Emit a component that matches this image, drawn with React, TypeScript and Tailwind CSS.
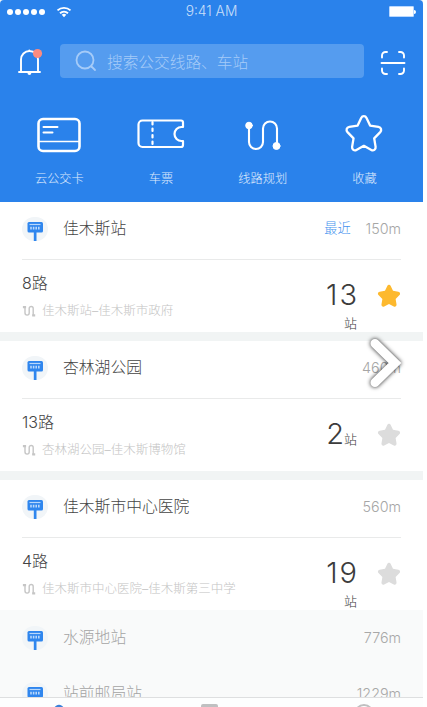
import type { ReactNode } from "react";

type Stop = {
  name: string;
  distance: string;
  nearest?: boolean;
  line: string;
  route: string;
  left: string;
  starred?: boolean;
  wrapped?: boolean;
};

const STOPS: Stop[] = [
  { name: "佳木斯站", distance: "150m", nearest: true, line: "8路", route: "佳木斯站–佳木斯市政府", left: "13", starred: true, wrapped: true },
  { name: "杏林湖公园", distance: "460m", line: "13路", route: "杏林湖公园–佳木斯博物馆", left: "2" },
  { name: "佳木斯市中心医院", distance: "560m", line: "4路", route: "佳木斯市中心医院–佳木斯第三中学", left: "19", wrapped: true },
];

const STAR = "M12 2.2c.7 0 1.2.4 1.5 1l2 4.3 4.7.7c1.500.2 2 1.900 1 3l-3.400 3.500.8 4.800c.2 1.400-1.200 2.400-2.400 1.700L12 18.900l-4.200 2.300c-1.200.7-2.600-.3-2.400-1.700l.8-4.800-3.400-3.500c-1-1.100-.5-2.800 1-3l4.700-.7 2-4.300c.3-.6.8-1 1.500-1Z";

function StopSign() {
  return (
    <span className="flex h-6 w-[26px] shrink-0 items-center justify-center rounded-full bg-[#f1f5f8]">
      <svg viewBox="0 0 26 24" className="h-6 w-[26px]" aria-hidden>
        <rect x="5.500" y="5" width="15.500" height="10.500" rx="1.500" fill="#2f86ee" />
        <path d="M11.800 14h2.700v10h-2.700z" fill="#2f86ee" />
        <path d="M7.500 7.500h11" stroke="#b9d8fb" strokeWidth="1.200" />
        <path d="M8.200 11.200h9.500" stroke="#b9d8fb" strokeWidth="2.800" strokeDasharray="1.600 1" />
      </svg>
    </span>
  );
}

function RouteIcon() {
  return (
    <svg viewBox="0 0 14 12" className="h-3 w-3.5 shrink-0" fill="none" stroke="#c6c6c6" aria-hidden>
      <path d="M3 2v6a2.100 2.100 0 0 0 4.200 0V3.500a2 2 0 0 1 4 0V11" strokeWidth="1.400" />
      <path d="M.9 2.200h3.200M10.200 10.300h3" strokeWidth="2.200" />
    </svg>
  );
}

function Shortcut({ label, children }: { label: string; children: ReactNode }) {
  return (
    <div className="flex w-[101.700px] flex-col items-center">
      <svg viewBox="0 0 50 42" className="h-[42px] w-[50px]" fill="none" stroke="white" strokeLinecap="round" strokeLinejoin="round" aria-hidden>
        {children}
      </svg>
      <span className="mt-[15px] text-[12.200px] leading-[18px] text-white/85">{label}</span>
    </div>
  );
}

function StopCard({ stop }: { stop: Stop }) {
  return (
    <section className="mb-[9px] h-[130px] shrink-0 bg-white px-[22px] last:mb-0">
      <div className="flex h-[58px] items-center border-b border-[#e9eaea] pb-[3px]">
        <StopSign />
        <h2 className="ml-[15px] flex-1 text-[15.800px] text-[#444]">{stop.name}</h2>
        {stop.nearest && <span className="mr-[15px] text-[13.200px] text-[#4593ee]">最近</span>}
        <span className="text-[14.300px] text-[#a6a6a6]">{stop.distance}</span>
      </div>
      <div className="flex h-[72px]">
        <div className="flex-1 pt-[11px]">
          <p className="text-[16px] leading-[24px] text-[#444]">{stop.line}</p>
          <p className="mt-[7px] flex items-center gap-[6px] text-[12.500px] leading-[18px] text-[#c4c4c4]">
            <RouteIcon />
            {stop.route}
          </p>
        </div>
        {stop.wrapped ? (
          <div className="flex flex-col items-end pt-[17px] text-[#3c3c3c]">
            <span className="-mr-[2px] text-[29px] leading-[36px] tracking-[2px]">{stop.left}</span>
            <span className="text-[13px] leading-[20px]">站</span>
          </div>
        ) : (
          <div className="flex items-baseline pt-[17px] text-[#3c3c3c]">
            <span className="text-[29px] leading-[36px]">{stop.left}</span>
            <span className="text-[13px]">站</span>
          </div>
        )}
        <svg viewBox="1.500 1.500 21 21" className={`ml-[20px] mt-[24px] h-[24px] w-[24px] ${stop.starred ? "fill-[#fdb92e]" : "fill-[#dcdcdc]"}`} aria-hidden>
          <path d={STAR} />
        </svg>
      </div>
    </section>
  );
}

function FarStop({ name, distance }: { name: string; distance: string }) {
  return (
    <div className="flex h-[56px] shrink-0 items-center px-[22px]">
      <StopSign />
      <span className="ml-[15px] flex-1 text-[15.800px] text-[#a4a4a4]">{name}</span>
      <span className="text-[14.300px] text-[#a8a8a8]">{distance}</span>
    </div>
  );
}

export default function App() {
  return (
    <div className="relative flex h-[707px] w-[423px] flex-col overflow-hidden bg-[#f1f4f4] font-['Inter','Noto_Sans_CJK_SC',sans-serif] font-light">
      <header className="h-[202px] shrink-0 rounded-t-[4px] bg-[#2a82eb]">
        {/* Status bar */}
        <div className="grid h-[23px] grid-cols-3 items-center px-[7px]">
          <div className="flex items-center gap-[2px]">
            {[0, 1, 2, 3, 4].map((i) => (
              <span key={i} className="size-[6px] rounded-full bg-white" />
            ))}
            <svg viewBox="0 0 16 12" className="ml-[9px] h-3 w-4" fill="none" stroke="white" aria-hidden>
              <path d="M1.500 4.400a9.600 9.600 0 0 1 13 0M4 7.200a6 6 0 0 1 8 0" strokeWidth="1.900" />
              <path d="M5.700 8.800a3.600 3.600 0 0 1 4.600 0L8 11.300Z" fill="white" stroke="none" />
            </svg>
          </div>
          <span className="text-center text-[13.800px] text-white/75">9:41 AM</span>
          <div className="flex items-center justify-end">
            <span className="h-[11px] w-[25px] rounded-[1px] border border-[#b9d8ff] bg-white" />
            <span className="h-[4px] w-[2px] rounded-r bg-white" />
          </div>
        </div>

        {/* Search */}
        <div className="flex items-center px-[17px] pt-[21px]">
          <svg viewBox="0 0 26 28" className="h-7 w-[26px]" fill="none" stroke="white" strokeWidth="1.900" strokeLinecap="round" aria-hidden>
            <path d="M2 25h21M4 25V12.500a8.500 8.500 0 0 1 17 0V25M12.300 3.500v.5" />
            <path d="M10.500 26h3.800a1.900 1.900 0 0 1-3.800 0Z" fill="white" stroke="none" />
            <circle cx="20.500" cy="6.500" r="4.600" fill="#fa8b80" stroke="none" />
          </svg>
          <div className="ml-[17px] flex h-[34px] w-[304px] items-center rounded-[4px] bg-[#559cef] pl-[15px] text-[#a5cbf8]">
            <svg viewBox="0 0 22 22" className="size-[22px]" fill="none" stroke="currentColor" strokeWidth="1.800" strokeLinecap="round" aria-hidden>
              <circle cx="10" cy="10" r="8.500" />
              <path d="m16.500 16.500 3.500 3.500" />
            </svg>
            <span className="ml-[10px] pt-[3px] text-[15.700px]">搜索公交线路、车站</span>
          </div>
          <svg viewBox="0 0 26 26" className="ml-[16px] mt-[3px] size-[26px]" fill="none" stroke="white" strokeWidth="1.900" strokeLinecap="round" aria-hidden>
            <path d="M2 7.500V5.500A3.500 3.500 0 0 1 5.500 2h1.500M19 2h1.500A3.500 3.500 0 0 1 24 5.500v2M24 18.500v2a3.500 3.500 0 0 1-3.500 3.500H19M7 24H5.500A3.500 3.500 0 0 1 2 20.500v-2M1.500 13h23" />
          </svg>
        </div>

        {/* Shortcuts */}
        <div className="flex pl-[8.500px] pt-[35px]">
          <Shortcut label="云公交卡">
            <rect x="4.500" y="6" width="41" height="32" rx="4.500" strokeWidth="2.600" />
            <path d="M5 28.500h40" strokeWidth="1.600" />
            <path d="M9.500 14h14M9.500 19.500h9" strokeWidth="2" />
          </Shortcut>
          <Shortcut label="车票">
            <path d="M47 14V9.500a2 2 0 0 0-2-2H6.500a4 4 0 0 0-4 4v18.500a4 4 0 0 0 4 4H45a2 2 0 0 0 2-2V28h-1.500a7 7 0 0 1 0-14Z" strokeWidth="2.200" />
            <path d="M16.500 9v24" strokeWidth="2.200" strokeDasharray="2.500 4" />
          </Shortcut>
          <Shortcut label="线路规划">
            <path d="M11 13v16a7 7 0 0 0 14 0V15.500a7 7 0 0 1 14 0v17" strokeWidth="2.100" />
            <circle cx="11" cy="12.500" r="3.300" fill="white" />
            <circle cx="38.500" cy="33" r="3.500" fill="white" />
          </Shortcut>
          <Shortcut label="收藏">
            <path transform="translate(3.500 -0.800) scale(1.780)" d={STAR} strokeWidth="1.300" />
          </Shortcut>
        </div>
      </header>

      {/* Nearby stops */}
      <main className="shrink-0">
        {STOPS.map((stop) => (
          <StopCard key={stop.name} stop={stop} />
        ))}
      </main>

      <div className="h-[87px] shrink-0 overflow-hidden bg-[#f9fafa]">
        <FarStop name="水源地站" distance="776m" />
        <FarStop name="站前邮局站" distance="1229m" />
      </div>

      {/* Tab bar */}
      <nav className="h-[10px] shrink-0 overflow-hidden border-t border-[#dedfe0] bg-[#fdfefe]">
        <div className="flex items-start pl-[48px] pt-[6px]">
          <svg viewBox="0 0 22 20" className="h-5 w-[22px]" fill="none" stroke="#3b81d9" strokeWidth="3" aria-hidden>
            <path d="m2 9 7-6q2-1.500 4 0l7 6v10H2Z" />
          </svg>
          <span className="ml-[131px] h-5 w-[17px] rounded-[2px] bg-[#bfc0c1]" />
          <span className="ml-[136px] size-[20px] rounded-full border-2 border-[#bfc0c1]" />
        </div>
      </nav>

      <button type="button" aria-label="下一张" className="absolute left-[363px] top-[332px]">
        <svg viewBox="0 0 44 62" className="h-[62px] w-[44px] drop-shadow-[0_0_2px_rgba(0,0,0,0.9)]" fill="none" stroke="white" strokeWidth="9" strokeLinecap="round">
          <path d="m12 11.500 20 19.500-20 19.500" />
        </svg>
      </button>
    </div>
  );
}
